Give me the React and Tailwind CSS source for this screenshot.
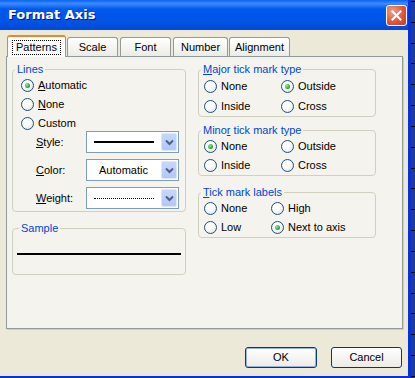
import React from 'react';

const font = { fontFamily: '"Liberation Sans", Arial, sans-serif' };

function Radio({ checked }) {
  return (
    <span className="relative inline-flex h-[13px] w-[13px] shrink-0 items-center justify-center rounded-full border border-[#1c5180] bg-[radial-gradient(circle_at_40%_35%,#ffffff_30%,#dcdcd7_100%)]">
      {checked && (
        <span className="h-[5px] w-[5px] rounded-full bg-[radial-gradient(circle_at_35%_35%,#9ee79e,#21a121_70%)]" />
      )}
    </span>
  );
}

function Label({ text, u }) {
  if (u === undefined) return text;
  return (
    <>
      {text.slice(0, u)}
      <span className="underline">{text[u]}</span>
      {text.slice(u + 1)}
    </>
  );
}

function Option({ label, u, checked, className = '' }) {
  return (
    <div className={`flex items-center gap-[4px] ${className}`}>
      <Radio checked={checked} />
      <span className="leading-[13px]">
        <Label text={label} u={u} />
      </span>
    </div>
  );
}

function Group({ title, u, className = '', children }) {
  return (
    <fieldset className={`rounded-[4px] border border-[#d0d0bf] ${className}`}>
      <legend className="ml-[2px] px-[2px] text-[11px] leading-[13px] text-[#0046d5]">
        <Label text={title} u={u} />
      </legend>
      {children}
    </fieldset>
  );
}

function Dropdown({ children }) {
  return (
    <div className="flex h-[22px] w-[93px] border border-[#7f9db9] bg-white">
      <div className="flex flex-1 items-center justify-center">{children}</div>
      <div className="m-[1px] flex w-[16px] items-center justify-center rounded-[2px] border border-[#dbe5fb] bg-[linear-gradient(#c6d7fc,#b3c8f7)]">
        <svg width="9" height="7" viewBox="0 0 9 7">
          <path d="M1 1.5 L4.5 5 L8 1.5" fill="none" stroke="#4d6185" strokeWidth="2" />
        </svg>
      </div>
    </div>
  );
}

function Tab({ label, active, className = '' }) {
  if (active) {
    return (
      <div className={`relative z-10 -mb-[1px] flex h-[22px] items-center justify-center rounded-t-[3px] border border-b-0 border-[#919b9c] border-t-[#e68b2c] border-t-2 bg-[#fcfcfe] ${className}`}>
        <span className="border border-dotted border-black px-[3px] leading-[13px]">{label}</span>
      </div>
    );
  }
  return (
    <div className={`mt-[2px] flex h-[19px] items-center justify-center rounded-t-[3px] border border-b-0 border-[#919b9c] bg-[linear-gradient(#ffffff,#ecebe6)] ${className}`}>
      <span className="leading-[13px]">{label}</span>
    </div>
  );
}

export default function App() {
  return (
    <div className="flex h-[378px] w-[415px] overflow-hidden bg-[#1c3f94] text-[11px] text-black" style={font}>
      <div className="flex w-[411px] flex-col border-r-[3px] border-b-[2px] border-[#0831d9]">
        <div className="flex h-[30px] items-center justify-between bg-[linear-gradient(#0a62f0_0%,#3b8cff_12%,#0058ee_30%,#0055e5_70%,#0248d8_100%)] pl-[8px] pr-[1px]">
          <span className="text-[13px] font-bold text-white [text-shadow:1px_1px_#0f1089]" style={{ fontFamily: '"DejaVu Sans", sans-serif' }}>
            Format Axis
          </span>
          <div className="flex h-[21px] w-[21px] items-center justify-center rounded-[3px] border border-white bg-[radial-gradient(circle_at_30%_30%,#f0a08a,#e0573a_55%,#c23b1b)]">
            <svg width="11" height="11" viewBox="0 0 11 11">
              <path d="M1.5 1.5 L9.5 9.5 M9.5 1.5 L1.5 9.5" stroke="white" strokeWidth="2" strokeLinecap="square" />
            </svg>
          </div>
        </div>

        <div className="flex flex-1 flex-col bg-[#ece9d8] pl-[6px] pr-[5px] pt-[5px]">
          <div className="flex items-end pl-[1px]">
            <Tab label="Patterns" active className="w-[59px]" />
            <Tab label="Scale" className="ml-[1px] w-[51px]" />
            <Tab label="Font" className="ml-[2px] w-[51px]" />
            <Tab label="Number" className="ml-[2px] w-[55px]" />
            <Tab label="Alignment" className="ml-[1px] w-[61px]" />
          </div>

          <div className="flex h-[273px] gap-[12px] border border-[#919b9c] bg-[#f4f3ee] pl-[5px] pt-[6px] shadow-[1px_1px_0_#d0cec4]">
            <div className="flex w-[174px] flex-col">
              <Group title="Lines" className="pb-[2px]">
                <div className="flex flex-col pl-[8px]">
                  <Option label="Automatic" u={0} checked className="h-[19px]" />
                  <Option label="None" u={0} className="h-[19px]" />
                  <Option label="Custom" className="h-[19px]" />
                  <div className="-mt-[2px] flex flex-col gap-[6px] pl-[15px]">
                    <div className="flex items-center">
                      <span className="w-[50px]"><Label text="Style:" u={0} /></span>
                      <Dropdown>
                        <span className="block h-[2px] w-[60px] bg-black" />
                      </Dropdown>
                    </div>
                    <div className="flex items-center">
                      <span className="w-[50px]"><Label text="Color:" u={0} /></span>
                      <Dropdown>
                        <span>Automatic</span>
                      </Dropdown>
                    </div>
                    <div className="flex items-center">
                      <span className="w-[50px]"><Label text="Weight:" u={0} /></span>
                      <Dropdown>
                        <span className="block w-[60px] border-t border-dotted border-black" />
                      </Dropdown>
                    </div>
                  </div>
                </div>
              </Group>

              <Group title="Sample" className="mt-[10px] h-[53px] px-[4px]">
                <div className="mt-[18px] h-[2px] bg-black" />
              </Group>
            </div>

            <div className="flex w-[178px] flex-col">
              <Group title="Major tick mark type" u={0}>
                <div className="grid grid-cols-[77px_1fr] pl-[5px]">
                  <Option label="None" className="h-[20px]" />
                  <Option label="Outside" checked className="h-[20px]" />
                  <Option label="Inside" className="h-[20px]" />
                  <Option label="Cross" className="h-[20px]" />
                </div>
              </Group>

              <Group title="Minor tick mark type" u={4} className="mt-[7px]">
                <div className="grid grid-cols-[77px_1fr] pl-[5px]">
                  <Option label="None" checked className="h-[19px]" />
                  <Option label="Outside" className="h-[19px]" />
                  <Option label="Inside" className="h-[19px]" />
                  <Option label="Cross" className="h-[19px]" />
                </div>
              </Group>

              <Group title="Tick mark labels" u={0} className="mt-[10px]">
                <div className="grid grid-cols-[67px_1fr] pl-[5px]">
                  <Option label="None" className="h-[19px]" />
                  <Option label="High" className="h-[19px]" />
                  <Option label="Low" className="h-[19px]" />
                  <Option label="Next to axis" checked className="h-[19px]" />
                </div>
              </Group>
            </div>
          </div>

          <div className="mt-[18px] flex justify-end gap-[14px] pr-[1px]">
            <button className="h-[21px] w-[72px] rounded-[3px] border border-[#003c74] bg-[linear-gradient(#ffffff,#ecebe6)] shadow-[inset_0_0_0_1px_#97b4e8]">
              OK
            </button>
            <button className="h-[21px] w-[71px] rounded-[3px] border border-[#003c74] bg-[linear-gradient(#ffffff,#ecebe6)]">
              Cancel
            </button>
          </div>
        </div>
      </div>
      <div className="flex flex-1 flex-col justify-between py-[1px]">
        {[0, 1, 2, 3, 4, 5, 6, 7, 8, 9, 10, 11, 12, 13, 14, 15, 16, 17, 18].map((i) => (
          <div key={i} className="h-[1px] bg-black" />
        ))}
      </div>
    </div>
  );
}
